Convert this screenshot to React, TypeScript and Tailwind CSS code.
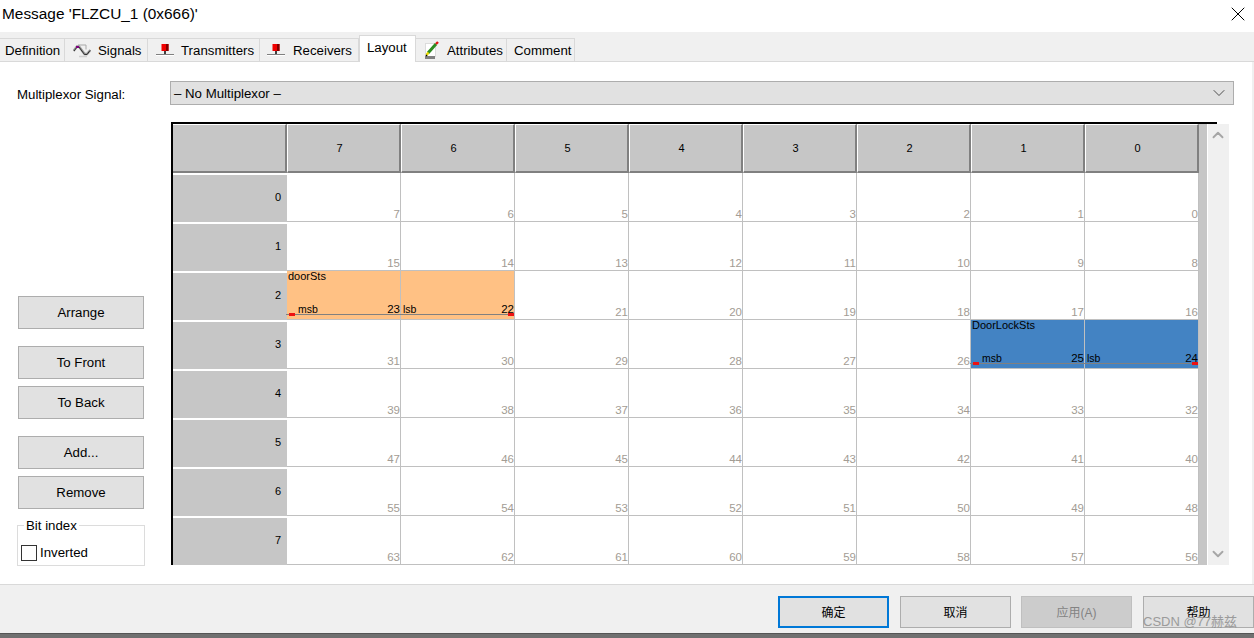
import React from 'react';
import { ChevronDown, ChevronUp, X } from 'lucide-react';

const FONT = 'font-["Liberation_Sans","Noto_Sans_CJK_SC",sans-serif]';
const COLS = [7, 6, 5, 4, 3, 2, 1, 0];
const ROWS = [0, 1, 2, 3, 4, 5, 6, 7];

const NetworkIcon = () => (
  <svg width="18" height="14" viewBox="0 0 18 14" className="shrink-0">
    <rect x="5.5" y="0" width="7" height="7" fill="#f00000" />
    <rect x="10" y="0" width="2.5" height="7" fill="#800000" />
    <rect x="8" y="7" width="2" height="3" fill="#404040" />
    <rect x="0" y="10" width="18" height="1" fill="#808080" />
    <rect x="0" y="11" width="18" height="1" fill="#ffffff" />
  </svg>
);

const SignalIcon = () => (
  <svg width="18" height="14" viewBox="0 0 18 14" className="shrink-0" fill="none">
    <path d="M5 1H13V5.5" stroke="#a8a8a8" />
    <path d="M6 12.5H14" stroke="#d0d0d0" strokeWidth="1.5" />
    <path d="M0.5 7L4 2.5H6L11.5 10H14L17.5 6" stroke="#9a9a9a" strokeWidth="2.4" />
    <path d="M1 7L4 3H6L11.5 10.5H14L17 6.5" stroke="#303030" strokeWidth="1" />
    <rect x="3" y="2" width="3" height="2" fill="#800080" />
  </svg>
);

const AttributeIcon = () => (
  <svg width="14" height="19" viewBox="0 0 14 19" className="shrink-0" fill="none">
    <rect x="0.5" y="2.5" width="10" height="13" fill="#ffffff" stroke="#c0c0c0" strokeDasharray="1 1" />
    <rect x="0" y="15" width="10" height="3" fill="#808080" />
    <path d="M3 12L11 3" stroke="#2e8b20" strokeWidth="3" />
    <path d="M11 3L13 1" stroke="#e01010" strokeWidth="2.4" />
    <path d="M1.5 14L3.5 11.5" stroke="#e8d800" strokeWidth="2.6" />
    <path d="M1 15L2 14" stroke="#000000" strokeWidth="1.5" />
  </svg>
);

const TABS = [
  { label: 'Definition', width: 'w-[65px]', pad: 'pl-[5px]', gap: 'gap-0', icon: null },
  { label: 'Signals', width: 'w-[83px]', pad: 'pl-[8px]', gap: 'gap-[7px]', icon: <SignalIcon /> },
  { label: 'Transmitters', width: 'w-[112px]', pad: 'pl-[8px]', gap: 'gap-[7px]', icon: <NetworkIcon /> },
  { label: 'Receivers', width: 'w-[99px]', pad: 'pl-[7px]', gap: 'gap-[8px]', icon: <NetworkIcon /> },
  { label: 'Layout', width: 'w-[57px]', pad: 'pl-[7px]', gap: 'gap-0', icon: null, active: true },
  { label: 'Attributes', width: 'w-[91px]', pad: 'pl-[9px]', gap: 'gap-[8px]', icon: <AttributeIcon /> },
  { label: 'Comment', width: 'w-[68px]', pad: 'pl-[7px]', gap: 'gap-0', icon: null },
];

const SideButton = ({ label, className = '' }: { label: string; className?: string }) => (
  <button className={`h-[33px] w-[126px] border border-[#adadad] bg-[#e1e1e1] pt-px text-[13.25px] text-black ${className}`}>
    {label}
  </button>
);

const Marker = ({ side }: { side: 'left' | 'right' }) => (
  <div className={`absolute top-[-1px] h-[3px] w-[6px] bg-[#ee1111] ${side === 'left' ? 'left-[3px]' : 'right-0'}`} />
);

const SignalCell = ({ bit, name, msb }: { bit: number; name?: string; msb: boolean }) => (
  <div className={`relative flex flex-col justify-between border-r border-b border-[#c0c0c0] text-black ${bit > 23 ? 'bg-[#4383c3]' : 'bg-[#ffc184]'}`}>
    <div className="pl-px text-[11px] leading-[11px]">{name}</div>
    <div className="mb-[4px] flex items-end justify-between leading-none">
      <span className={`text-[10.5px] leading-[11px] ${msb ? 'pl-[11px]' : 'pl-[2px]'}`}>{msb ? 'msb' : 'lsb'}</span>
      <span className="text-[11.5px] leading-[11px]">{bit}</span>
    </div>
    {msb && (
      <div className="absolute bottom-[4px] left-[-1px] z-10 h-px w-[228px] bg-[#808080]">
        <Marker side="left" />
        <Marker side="right" />
      </div>
    )}
  </div>
);

const GridCell = ({ row, col }: { row: number; col: number }) => {
  const bit = row * 8 + col;
  if (bit === 23) return <SignalCell bit={bit} name="doorSts" msb />;
  if (bit === 22) return <SignalCell bit={bit} msb={false} />;
  if (bit === 25) return <SignalCell bit={bit} name="DoorLockSts" msb />;
  if (bit === 24) return <SignalCell bit={bit} msb={false} />;
  return (
    <div className="flex items-end justify-end border-r border-b border-[#c0c0c0] bg-white pb-[1px] text-[11.5px] leading-[11px] text-[#a39c94]">
      {bit}
    </div>
  );
};

const LayoutGrid = () => (
  <div className="grid grid-cols-[114px_repeat(8,114px)] grid-rows-[repeat(9,49px)] border-l-2 border-black">
    <div className="border-t border-r-2 border-b-2 border-t-white border-r-[#808080] border-b-[#808080] bg-[#c6c6c6]" />
    {COLS.map((c) => (
      <div key={c} className="flex items-center justify-center border-t border-l border-r-2 border-b-2 border-t-white border-l-white border-r-[#808080] border-b-[#808080] bg-[#c6c6c6] pr-[8px] text-[11px] text-black">
        {c}
      </div>
    ))}
    {ROWS.map((r) => (
      <React.Fragment key={r}>
        <div className="flex items-center justify-end border-t-2 border-white bg-[#c6c6c6] pr-[6px] pb-[2px] text-[11px] text-black">{r}</div>
        {COLS.map((c) => (
          <GridCell key={c} row={r} col={c} />
        ))}
      </React.Fragment>
    ))}
  </div>
);

const FooterButton = ({ label, variant }: { label: string; variant?: 'primary' | 'disabled' }) => {
  let style = 'border border-[#adadad] bg-[#e1e1e1] text-black';
  if (variant === 'primary') style = 'border-2 border-[#0078d7] bg-[#e1e1e1] text-black';
  if (variant === 'disabled') style = 'border border-[#bfbfbf] bg-[#cccccc] text-[#838383]';
  return <button className={`h-[32px] w-[111px] pt-px text-[12px] ${style}`}>{label}</button>;
};

export default function App() {
  return (
    <div className={`relative flex h-[638px] w-[1254px] flex-col overflow-hidden bg-white ${FONT}`}>
      {/* Title bar */}
      <div className="flex h-[32px] items-center justify-between pl-[2px] pr-[4px] pb-[5px]">
        <span className="text-[15.4px] text-black">Message 'FLZCU_1 (0x666)'</span>
        <X size={24} strokeWidth={1} className="text-black" />
      </div>

      {/* Tabs */}
      <div className="flex h-[30px] items-end border-b border-[#d9d9d9] bg-[#f0f0f0]">
        {TABS.map((t) =>
          t.active ? (
            <div key={t.label} className={`z-10 -mb-px flex h-[27px] items-center border-x border-t border-[#d9d9d9] border-b-0 bg-white pb-[2px] text-[13.25px] text-black ${t.width} ${t.pad}`}>
              {t.label}
            </div>
          ) : (
            <div key={t.label} className={`flex h-[23px] items-center border-t border-r border-[#d9d9d9] pt-px text-[13.25px] text-black ${t.width} ${t.pad} ${t.gap}`}>
              {t.icon}
              <span>{t.label}</span>
            </div>
          ),
        )}
      </div>

      {/* Page */}
      <div className="flex h-[522px] flex-col border-r-2 border-[#f0f0f0]">
        <div className="mt-[19px] flex items-center">
          <label className="w-[170px] pl-[17px] pt-[3px] text-[13.25px] text-black">Multiplexor Signal:</label>
          <div className="flex h-[24px] w-[1064px] items-center justify-between border border-[#adadad] bg-[#e1e1e1] pl-[3px] pr-[4px] text-[13.25px] text-black">
            <span className="pt-px">– No Multiplexor –</span>
            <ChevronDown size={20} strokeWidth={1} className="text-[#303030]" />
          </div>
        </div>

        <div className="mt-[17px] flex">
          <div className="flex w-[171px] flex-col items-start pl-[18px] pt-[174px]">
            <SideButton label="Arrange" />
            <SideButton label="To Front" className="mt-[17px]" />
            <SideButton label="To Back" className="mt-[7px]" />
            <SideButton label="Add..." className="mt-[17px]" />
            <SideButton label="Remove" className="mt-[7px]" />
            <fieldset className="mt-[9px] -ml-px h-[48px] w-[128px] border border-[#dcdcdc] px-[3px]">
              <legend className="ml-[3px] px-[2px] text-[13.25px] leading-[15px] text-black">Bit index</legend>
              <div className="mt-[11px] flex items-center gap-[3px] text-[13.25px] leading-[16px] text-black">
                <span className="h-[16px] w-[16px] border border-[#333333] bg-white" />
                <span className="pt-px">Inverted</span>
              </div>
            </fieldset>
          </div>

          <div className="w-[1058px]">
            <div className="h-[2px] w-[1046px] bg-black" />
            <div className="flex">
              <LayoutGrid />
              <div className="h-[441px] w-[8px] bg-[#c6c6c6]" />
              <div className="ml-px flex h-[441px] w-[22px] flex-col items-center justify-between bg-[#f0f0f0] py-[2px]">
                <ChevronUp size={18} strokeWidth={2.5} className="text-[#a6a6a6]" />
                <ChevronDown size={18} strokeWidth={2.5} className="text-[#a6a6a6]" />
              </div>
            </div>
          </div>
        </div>
      </div>

      {/* Footer */}
      <div className="flex h-[49px] items-start justify-end border-t border-[#d9d9d9] bg-[#f0f0f0] pt-[11px]">
        <FooterButton label="确定" variant="primary" />
        <div className="w-[11px]" />
        <FooterButton label="取消" />
        <div className="w-[10px]" />
        <FooterButton label="应用(A)" variant="disabled" />
        <div className="w-[11px]" />
        <FooterButton label="帮助" />
      </div>
      <div className="h-[5px] border-t border-[#555555] bg-[#707070]" />

      {/* Watermark */}
      <div className="absolute top-[613px] left-[1143px] text-[13px] leading-[18px] text-[#8a8a8a] opacity-80">CSDN @77赫兹</div>
    </div>
  );
}
